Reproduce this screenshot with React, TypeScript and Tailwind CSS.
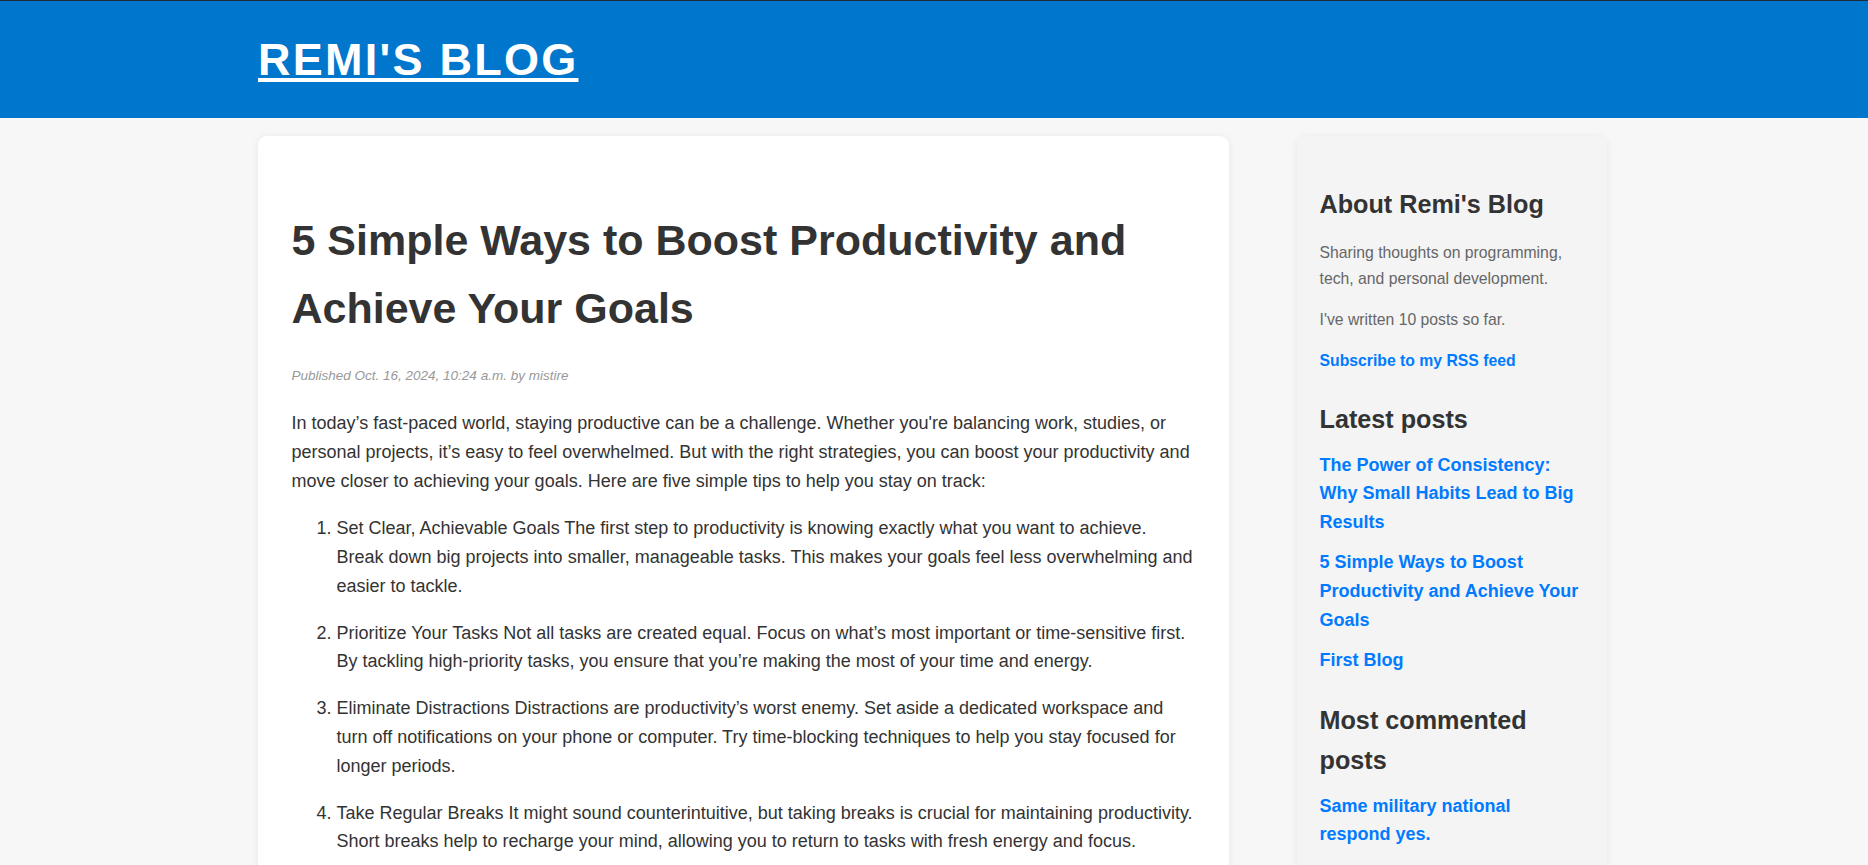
import React from "react";

const latest = [
  "The Power of Consistency: Why Small Habits Lead to Big Results",
  "5 Simple Ways to Boost Productivity and Achieve Your Goals",
  "First Blog",
];

const tips = [
  "Set Clear, Achievable Goals The first step to productivity is knowing exactly what you want to achieve. Break down big projects into smaller, manageable tasks. This makes your goals feel less overwhelming and easier to tackle.",
  "Prioritize Your Tasks Not all tasks are created equal. Focus on what’s most important or time-sensitive first. By tackling high-priority tasks, you ensure that you’re making the most of your time and energy.",
  "Eliminate Distractions Distractions are productivity’s worst enemy. Set aside a dedicated workspace and turn off notifications on your phone or computer. Try time-blocking techniques to help you stay focused for longer periods.",
  "Take Regular Breaks It might sound counterintuitive, but taking breaks is crucial for maintaining productivity. Short breaks help to recharge your mind, allowing you to return to tasks with fresh energy and focus.",
];

export default function App() {
  return (
    <div className="min-h-screen bg-[#f7f7f7] font-['Liberation_Sans',Arial,sans-serif] text-[#333]">
      <header className="h-[118px] bg-[#0077cc] border-t border-[#1e2b38] flex items-center">
        <div className="pl-[258px]">
          <a
            href="#"
            className="block text-white text-[45px] leading-[45px] font-bold tracking-[2.25px] underline"
          >
            REMI'S BLOG
          </a>
        </div>
      </header>

      <div className="flex items-start pl-[258px] pt-[18px]">
        <main className="w-[971px] shrink-0 bg-white rounded-[9px] shadow-[0_1px_8px_rgba(0,0,0,0.07)] pl-[33.5px] pr-[32px] pt-8 pb-8">
          <h1 className="mt-[38px] text-[43px] leading-[68px] font-bold text-[#333]">
            5 Simple Ways to Boost Productivity and Achieve Your Goals
          </h1>
          <p className="mt-[23px] text-[13.5px] leading-[21.6px] italic text-[#999]">
            Published Oct. 16, 2024, 10:24 a.m. by mistire
          </p>
          <p className="mt-[22.6px] text-[18px] leading-[28.8px] text-[#333]">
            In today’s fast-paced world, staying productive can be a challenge. Whether you're balancing work, studies, or
            personal projects, it’s easy to feel overwhelmed. But with the right strategies, you can boost your productivity and
            move closer to achieving your goals. Here are five simple tips to help you stay on track:
          </p>
          <ol className="mt-[18.6px] list-decimal pl-[45px] text-[18px] leading-[28.8px] text-[#333]">
            {tips.map((t, i) => (
              <li key={i} className="mb-[18px]">
                {t}
              </li>
            ))}
          </ol>
        </main>

        <aside className="ml-[68px] w-[310px] shrink-0 bg-[#f4f4f4] rounded-[9px] shadow-[0_1px_8px_rgba(0,0,0,0.07)] px-[22.5px] pt-[22.5px] pb-[22.5px]">
          <h2 className="mt-[25.5px] text-[25.2px] leading-[40.3px] font-bold text-[#333]">About Remi's Blog</h2>
          <p className="mt-[16px] text-[15.75px] leading-[25.2px] text-[#666]">
            Sharing thoughts on programming, tech, and personal development.
          </p>
          <p className="mt-[16px] text-[15.75px] leading-[25.2px] text-[#666]">I've written 10 posts so far.</p>
          <p className="mt-[16px] text-[15.75px] leading-[25.2px]">
            <a href="#" className="font-bold text-[#007bff]">
              Subscribe to my RSS feed
            </a>
          </p>

          <h2 className="mt-[26px] text-[25.2px] leading-[40.3px] font-bold text-[#333]">Latest posts</h2>
          <ul className="mt-[11.25px]">
            {latest.map((l) => (
              <li key={l} className="mb-[11.25px] text-[18px] leading-[28.8px]">
                <a href="#" className="font-bold text-[#007bff]">
                  {l}
                </a>
              </li>
            ))}
          </ul>

          <h2 className="mt-[25px] text-[25.2px] leading-[40.3px] font-bold text-[#333]">Most commented posts</h2>
          <ul className="mt-[11.25px]">
            <li className="mb-[11.25px] text-[18px] leading-[28.8px]">
              <a href="#" className="font-bold text-[#007bff]">
                Same military national respond yes.
              </a>
            </li>
          </ul>
        </aside>
      </div>
    </div>
  );
}
